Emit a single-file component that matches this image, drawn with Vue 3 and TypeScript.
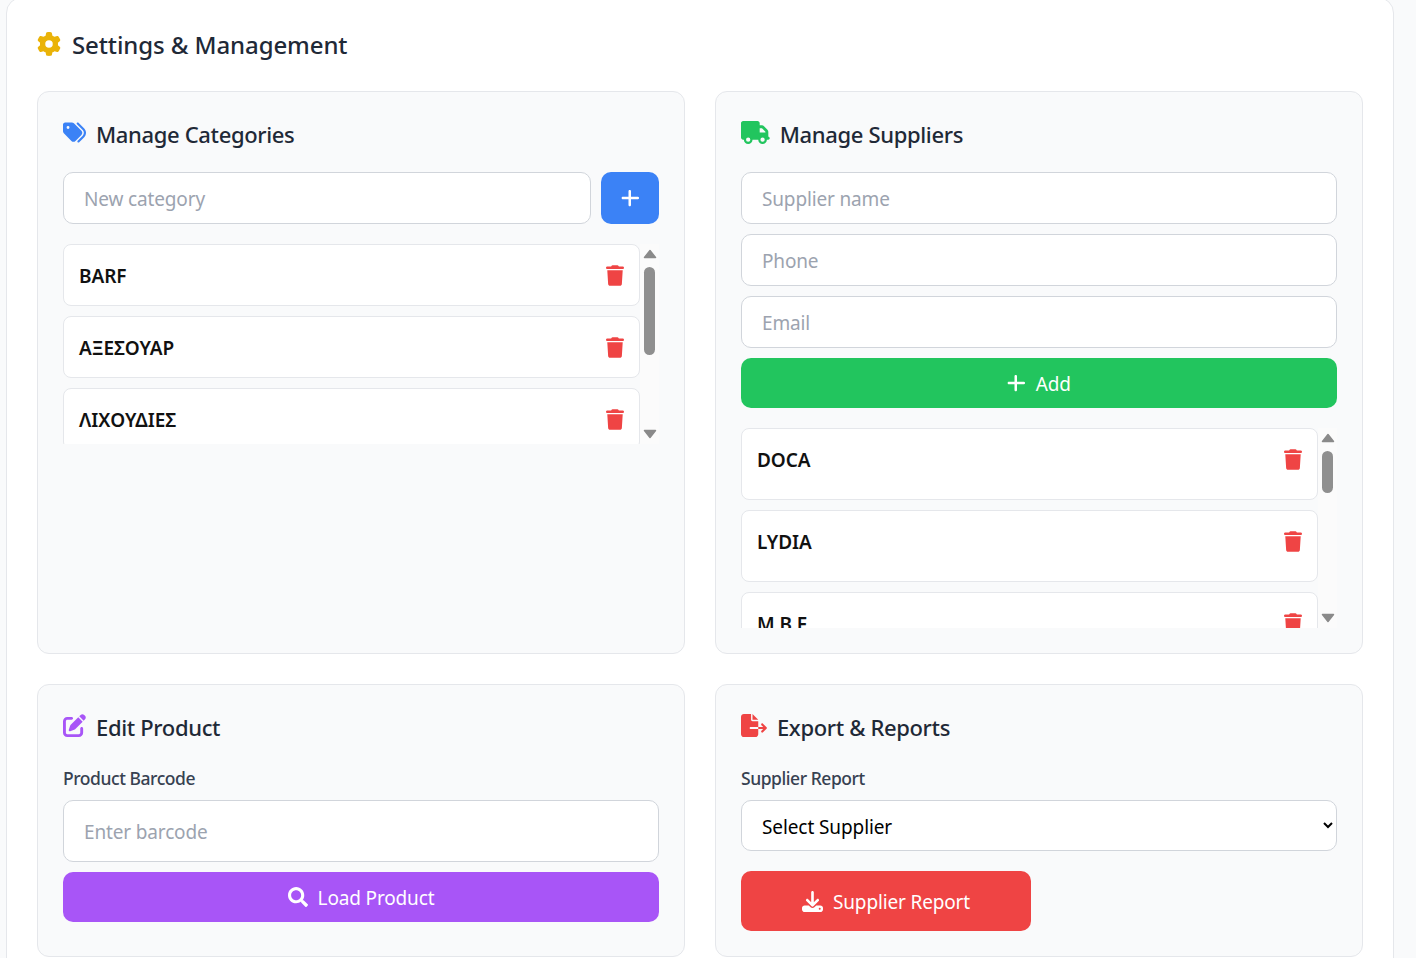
<script setup lang="ts">
const icons = {
  gear: { box: '0 0 512 512', d: 'M495.9 166.6c3.2 8.7 .5 18.4-6.4 24.6l-43.3 39.4c1.1 8.3 1.7 16.8 1.7 25.4s-.6 17.1-1.7 25.4l43.3 39.4c6.9 6.2 9.6 15.9 6.4 24.6c-4.4 11.9-9.7 23.3-15.8 34.3l-4.7 8.1c-6.6 11-14 21.4-22.1 31.2c-5.9 7.2-15.7 9.6-24.5 6.8l-55.7-17.7c-13.4 10.3-28.2 18.9-44 25.4l-12.5 57.1c-2 9.1-9 16.3-18.2 17.8c-13.8 2.3-28 3.5-42.5 3.5s-28.7-1.2-42.5-3.5c-9.2-1.5-16.2-8.7-18.2-17.8l-12.5-57.1c-15.8-6.5-30.6-15.1-44-25.4L83.1 425.9c-8.8 2.8-18.6 .3-24.5-6.8c-8.1-9.8-15.5-20.2-22.1-31.2l-4.7-8.1c-6.1-11-11.4-22.4-15.8-34.3c-3.2-8.7-.5-18.4 6.4-24.6l43.3-39.4C64.6 273.1 64 264.6 64 256s.6-17.1 1.7-25.4L22.4 191.2c-6.9-6.2-9.6-15.9-6.4-24.6c4.4-11.9 9.7-23.3 15.8-34.3l4.7-8.1c6.6-11 14-21.4 22.1-31.2c5.9-7.2 15.7-9.6 24.5-6.8l55.7 17.7c13.4-10.3 28.2-18.9 44-25.4l12.5-57.1c2-9.1 9-16.3 18.2-17.8C227.3 1.2 241.5 0 256 0s28.7 1.2 42.5 3.5c9.2 1.5 16.2 8.7 18.2 17.8l12.5 57.1c15.8 6.5 30.6 15.1 44 25.4l55.7-17.7c8.8-2.8 18.6-.3 24.5 6.8c8.1 9.8 15.5 20.2 22.1 31.2l4.7 8.1c6.1 11 11.4 22.4 15.8 34.3zM256 336a80 80 0 1 0 0-160 80 80 0 1 0 0 160z' },
  tags: { box: '0 0 512 512', d: 'M345 39.1L472.8 168.4c52.4 53 52.4 138.2 0 191.2L360.8 472.9c-9.3 9.4-24.5 9.5-33.9 .2s-9.5-24.5-.2-33.9L438.6 325.9c33.9-34.3 33.9-89.4 0-123.7L310.9 72.9c-9.3-9.4-9.2-24.6 .2-33.9s24.6-9.2 33.9 .2zM0 229.5V80C0 53.5 21.5 32 48 32H197.5c17 0 33.3 6.7 45.3 18.7l168 168c25 25 25 65.5 0 90.5L277.3 442.7c-25 25-65.5 25-90.5 0l-168-168C6.7 262.7 0 246.5 0 229.5zM144 144a32 32 0 1 0 -64 0 32 32 0 1 0 64 0z' },
  truck: { box: '0 0 640 512', d: 'M48 0C21.5 0 0 21.5 0 48V368c0 26.5 21.5 48 48 48H64c0 53 43 96 96 96s96-43 96-96H384c0 53 43 96 96 96s96-43 96-96h32c17.7 0 32-14.3 32-32s-14.3-32-32-32V288 256 237.3c0-17-6.7-33.3-18.7-45.3L512 114.7c-12-12-28.3-18.7-45.3-18.7H416V48c0-26.5-21.5-48-48-48H48zM416 160h50.7L544 237.3V256H416V160zM112 416a48 48 0 1 1 96 0 48 48 0 1 1 -96 0zm368-48a48 48 0 1 1 0 96 48 48 0 1 1 0-96z' },
  edit: { box: '0 0 512 512', d: 'M471.6 21.7c-21.9-21.9-57.3-21.9-79.2 0L362.3 51.7l97.9 97.9 30.1-30.1c21.9-21.9 21.9-57.3 0-79.2L471.6 21.7zm-299.2 220c-6.1 6.1-10.8 13.6-13.5 21.9l-29.6 88.8c-2.9 8.6-.6 18.1 5.8 24.6s15.9 8.7 24.6 5.8l88.8-29.6c8.2-2.7 15.7-7.4 21.9-13.5L437.7 172.3 339.7 74.3 172.4 241.7zM96 64C43 64 0 107 0 160V416c0 53 43 96 96 96H352c53 0 96-43 96-96V320c0-17.7-14.3-32-32-32s-32 14.3-32 32v96c0 17.7-14.3 32-32 32H96c-17.7 0-32-14.3-32-32V160c0-17.7 14.3-32 32-32h96c17.7 0 32-14.3 32-32s-14.3-32-32-32H96z' },
  fileExport: { box: '0 0 576 512', d: 'M0 64C0 28.7 28.7 0 64 0H224V128c0 17.7 14.3 32 32 32H384V288H216c-13.3 0-24 10.7-24 24s10.7 24 24 24H384V448c0 35.3-28.7 64-64 64H64c-35.3 0-64-28.7-64-64V64zM384 336V288H494.1l-39-39c-9.4-9.4-9.4-24.6 0-33.9s24.6-9.4 33.9 0l80 80c9.4 9.4 9.4 24.6 0 33.9l-80 80c-9.4 9.4-24.6 9.4-33.9 0s-9.4-24.6 0-33.9l39-39H384zm0-208H256V0L384 128z' },
  search: { box: '0 0 512 512', d: 'M505 442.7L405.3 343c-4.5-4.5-10.6-7-17-7H372c27.6-35.3 44-79.7 44-128C416 93.1 322.9 0 208 0S0 93.1 0 208s93.1 208 208 208c48.3 0 92.7-16.4 128-44v16.3c0 6.4 2.5 12.5 7 17l99.7 99.7c9.4 9.4 24.6 9.4 33.9 0l28.3-28.3c9.4-9.4 9.4-24.6.1-34zM208 336c-70.7 0-128-57.2-128-128 0-70.7 57.2-128 128-128 70.7 0 128 57.2 128 128 0 70.7-57.2 128-128 128z' },
  download: { box: '0 0 512 512', d: 'M288 32c0-17.7-14.3-32-32-32s-32 14.3-32 32V274.7l-73.4-73.4c-12.5-12.5-32.8-12.5-45.3 0s-12.5 32.8 0 45.3l128 128c12.5 12.5 32.8 12.5 45.3 0l128-128c12.5-12.5 12.5-32.8 0-45.3s-32.8-12.5-45.3 0L288 274.7V32zM64 352c-35.3 0-64 28.7-64 64v32c0 35.3 28.7 64 64 64H448c35.3 0 64-28.7 64-64V416c0-35.3-28.7-64-64-64H346.5l-45.3 45.3c-25 25-65.5 25-90.5 0L165.5 352H64zm368 56a24 24 0 1 1 0 48 24 24 0 1 1 0-48z' },
  plus: { box: '0 0 448 512', d: 'M256 80c0-17.7-14.3-32-32-32s-32 14.3-32 32V224H48c-17.7 0-32 14.3-32 32s14.3 32 32 32H192V432c0 17.7 14.3 32 32 32s32-14.3 32-32V288H432c17.7 0 32-14.3 32-32s-14.3-32-32-32H256V80z' },
  trash: { box: '0 0 448 512', d: 'M135.2 17.7L128 32H32C14.3 32 0 46.3 0 64S14.3 96 32 96H416c17.7 0 32-14.3 32-32s-14.3-32-32-32H320l-7.2-14.3C307.4 6.8 296.3 0 284.2 0H163.8c-12.1 0-23.2 6.8-28.6 17.7zM416 128H32L53.2 467c1.6 25.3 22.6 45 47.9 45H346.9c25.3 0 46.3-19.7 47.9-45L416 128z' },
};

const categories = ['BARF', 'ΑΞΕΣΟΥΑΡ', 'ΛΙΧΟΥΔΙΕΣ'];
const suppliers = ['DOCA', 'LYDIA', 'M B F'];
</script>

<template>
  <div class="page">
    <section class="settings">
      <h2 class="title">
        <svg class="title-icon" :viewBox="icons.gear.box"><path :d="icons.gear.d" /></svg>
        Settings &amp; Management
      </h2>

      <div class="grid">
        <div class="panel">
          <h3 class="heading">
            <svg class="icon blue" :viewBox="icons.tags.box"><path :d="icons.tags.d" /></svg>
            Manage Categories
          </h3>
          <div class="add-row">
            <input class="field" placeholder="New category" />
            <button class="btn-add-cat">
              <svg class="plus-icon" :viewBox="icons.plus.box"><path :d="icons.plus.d" /></svg>
            </button>
          </div>
          <div class="list-wrap">
            <ul class="list">
              <li v-for="c in categories" :key="c" class="item">
                <span>{{ c }}</span>
                <svg class="trash" :viewBox="icons.trash.box"><path :d="icons.trash.d" /></svg>
              </li>
            </ul>
            <div class="scrollbar">
              <svg class="arrow" viewBox="0 0 14 10"><path d="M7 1.5L12.5 8.5H1.5Z" /></svg>
              <div class="track"><div class="thumb thumb-cat"></div></div>
              <svg class="arrow" viewBox="0 0 14 10"><path d="M7 8.5L12.5 1.5H1.5Z" /></svg>
            </div>
          </div>
        </div>

        <div class="panel">
          <h3 class="heading">
            <svg class="icon green" :viewBox="icons.truck.box"><path :d="icons.truck.d" /></svg>
            Manage Suppliers
          </h3>
          <div class="stack">
            <input class="field" placeholder="Supplier name" />
            <input class="field" placeholder="Phone" />
            <input class="field" placeholder="Email" />
            <button class="btn btn-green">
              <svg class="plus-icon" :viewBox="icons.plus.box"><path :d="icons.plus.d" /></svg>
              <span>Add</span>
            </button>
          </div>
          <div class="list-wrap">
            <ul class="list">
              <li v-for="s in suppliers" :key="s" class="item supplier">
                <span>{{ s }}</span>
                <svg class="trash" :viewBox="icons.trash.box"><path :d="icons.trash.d" /></svg>
              </li>
            </ul>
            <div class="scrollbar">
              <svg class="arrow" viewBox="0 0 14 10"><path d="M7 1.5L12.5 8.5H1.5Z" /></svg>
              <div class="track"><div class="thumb thumb-sup"></div></div>
              <svg class="arrow" viewBox="0 0 14 10"><path d="M7 8.5L12.5 1.5H1.5Z" /></svg>
            </div>
          </div>
        </div>

        <div class="panel">
          <h3 class="heading">
            <svg class="icon purple" :viewBox="icons.edit.box"><path :d="icons.edit.d" /></svg>
            Edit Product
          </h3>
          <label class="label">Product Barcode</label>
          <input class="field tall" placeholder="Enter barcode" />
          <button class="btn btn-purple">
            <svg class="btn-icon" :viewBox="icons.search.box"><path :d="icons.search.d" /></svg>
            <span>Load Product</span>
          </button>
        </div>

        <div class="panel">
          <h3 class="heading">
            <svg class="icon red" :viewBox="icons.fileExport.box"><path :d="icons.fileExport.d" /></svg>
            Export &amp; Reports
          </h3>
          <label class="label">Supplier Report</label>
          <select class="select">
            <option>Select Supplier</option>
          </select>
          <button class="btn btn-red">
            <svg class="btn-icon" :viewBox="icons.download.box"><path :d="icons.download.d" /></svg>
            <span>Supplier Report</span>
          </button>
        </div>
      </div>
    </section>
  </div>
</template>

<style scoped>
.page {
  height: 958px;
  overflow: hidden;
  background: #f9fafb;
  font-family: "Noto Sans", sans-serif;
  color: #1f2937;
}

.settings {
  box-sizing: border-box;
  width: 1388px;
  margin: -3px 0 0 6px;
  padding: 32px 30px 30px;
  background: #fff;
  border: 1px solid #e5e7eb;
  border-radius: 16px;
}

.title {
  display: flex;
  align-items: center;
  height: 30px;
  margin: 0 0 31px;
  font-size: 24px;
  font-weight: 500;
  line-height: 30px;
  letter-spacing: -0.1px;
}

.title-icon {
  width: 24px;
  height: 24px;
  margin: -3px 11px 0 0;
  fill: #eab308;
}

.grid {
  display: grid;
  grid-template-columns: 648px 648px;
  grid-template-rows: 563px 273px;
  gap: 30px;
}

.panel {
  box-sizing: border-box;
  padding: 25px;
  background: #f9fafb;
  border: 1px solid #e5e7eb;
  border-radius: 12px;
}

.heading {
  display: flex;
  align-items: center;
  height: 34px;
  margin: 0 0 21px;
  font-size: 22px;
  font-weight: 500;
  letter-spacing: -0.35px;
}

.icon {
  height: 23px;
  margin: -4px 10px 0 0;
}

.blue { fill: #3b82f6; }
.green { fill: #22c55e; }
.purple { fill: #a855f7; }
.red { fill: #ef4444; }

.add-row {
  display: flex;
  gap: 10px;
}

.field {
  box-sizing: border-box;
  display: block;
  width: 100%;
  height: 52px;
  padding: 2px 20px 0;
  background: #fff;
  border: 1px solid #d1d5db;
  border-radius: 10px;
  font-family: inherit;
  font-size: 19px;
  letter-spacing: -0.15px;
  outline: none;
}

.field::placeholder {
  color: #9ca3af;
  opacity: 1;
}

.tall {
  height: 62px;
  margin-bottom: 10px;
}

.btn-add-cat {
  flex: 0 0 58px;
  display: flex;
  align-items: center;
  justify-content: center;
  height: 52px;
  padding: 0;
  background: #3b82f6;
  border: 0;
  border-radius: 10px;
}

.plus-icon {
  height: 20px;
  fill: #fff;
}

.stack {
  display: flex;
  flex-direction: column;
  gap: 10px;
}

.btn {
  display: flex;
  align-items: center;
  justify-content: center;
  gap: 10px;
  width: 100%;
  height: 50px;
  padding: 0;
  border: 0;
  border-radius: 10px;
  color: #fff;
  font-family: inherit;
  font-size: 19px;
  letter-spacing: -0.15px;
}

.btn span {
  padding-top: 2px;
}

.btn-green {
  gap: 11px;
  background: #22c55e;
}

.btn-purple { background: #a855f7; }

.btn-red {
  width: 290px;
  height: 60px;
  background: #ef4444;
}

.btn-icon {
  width: 21px;
  height: 21px;
  fill: #fff;
}

.btn-purple .btn-icon {
  width: 20px;
  height: 20px;
}

.list-wrap {
  display: flex;
  height: 200px;
  margin-top: 20px;
  overflow: hidden;
}

.list {
  flex: 1;
  display: flex;
  flex-direction: column;
  gap: 10px;
  margin: 0;
  padding: 0;
  list-style: none;
}

.item {
  box-sizing: border-box;
  flex: none;
  display: flex;
  align-items: flex-start;
  justify-content: space-between;
  height: 62px;
  padding: 16px 15px 14px;
  background: #fff;
  border: 1px solid #e5e7eb;
  border-radius: 8px;
  color: #111;
  font-size: 19px;
  font-weight: 600;
  line-height: 30px;
  letter-spacing: -0.05px;
}

.supplier {
  height: 72px;
}

.trash {
  width: 18px;
  height: 21px;
  margin: 4px 0 0;
  fill: #ef4444;
}

.scrollbar {
  flex: 0 0 19px;
  display: flex;
  flex-direction: column;
  align-items: center;
  background: #fbfbfb;
}

.arrow {
  flex: none;
  width: 14px;
  height: 10px;
  margin: 5px 0;
  fill: #8a8a8a;
  stroke: #8a8a8a;
  stroke-width: 1.5;
  stroke-linejoin: round;
}

.track {
  flex: 1;
  padding-top: 3px;
}

.thumb {
  width: 11px;
  background: #8f8f8f;
  border-radius: 6px;
}

.thumb-cat { height: 88px; }
.thumb-sup { height: 42px; }

.label {
  display: block;
  margin-bottom: 9px;
  color: #374151;
  font-size: 17.5px;
  font-weight: 500;
  line-height: 26px;
  letter-spacing: -0.45px;
}

.select {
  box-sizing: border-box;
  display: block;
  width: 100%;
  height: 51px;
  margin-bottom: 20px;
  padding: 2px 16px 0;
  background: #fff;
  border: 1px solid #d1d5db;
  border-radius: 10px;
  color: #000;
  font-family: inherit;
  font-size: 19px;
  letter-spacing: -0.1px;
  outline: none;
}
</style>
